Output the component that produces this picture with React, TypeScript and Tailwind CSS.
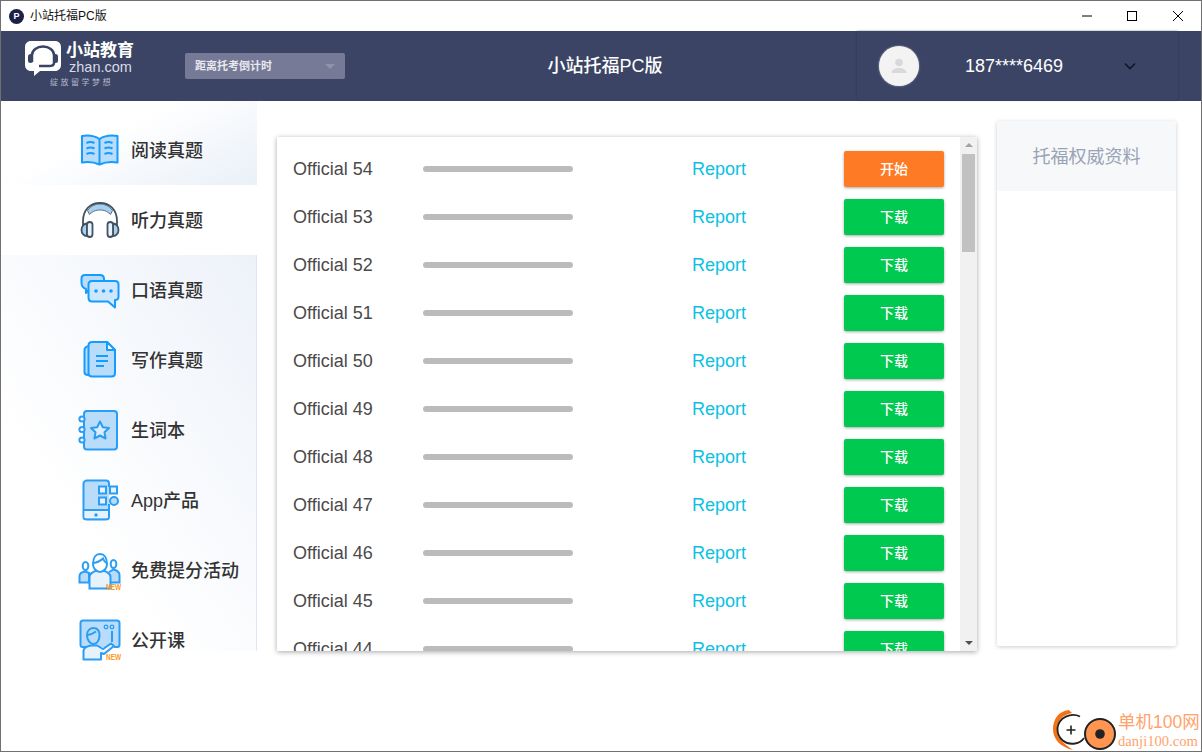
import type { ReactNode } from 'react'

const FONT = '"Liberation Sans", "Noto Sans CJK SC", sans-serif'
const BLUE = '#2a9df4'
const LINE = '#149cff'
const LIGHT = '#b9dcfa'

const papers = [54, 53, 52, 51, 50, 49, 48, 47, 46, 45, 44]

function IconBox({ children }: { children: ReactNode }) {
  return (
    <svg width="44" height="44" viewBox="0 0 44 44" fill="none" className="shrink-0 overflow-visible">
      {children}
    </svg>
  )
}

function BookIcon() {
  return (
    <IconBox>
      <path d="M21.500 11C16 7.500 10 7 4 8V34.500C10 33.500 16 34 21.500 36.500C27 34 33 33.500 39.500 34.500V8C33 7 27 7.500 21.500 11Z" fill={LIGHT} stroke={LINE} strokeWidth="2" strokeLinejoin="round" />
      <path d="M21.500 11V36" stroke={LINE} strokeWidth="2" />
      <path d="M8.500 15Q12.500 13 16.500 15M8.500 20.500Q12.500 18.500 16.500 20.500M8.500 26Q12.500 24 16.500 26M26.500 15Q30.500 13 34.500 15M26.500 20.500Q30.500 18.500 34.500 20.500M26.500 26Q30.500 24 34.500 26" stroke={LINE} strokeWidth="2" />
    </IconBox>
  )
}

function HeadphonesIcon() {
  return (
    <IconBox>
      <path d="M5 29V23C5 12 12 5 22 5C32 5 39 12 39 23V29" stroke="#43525f" strokeWidth="1.800" />
      <path d="M9.500 12.500C13 8 17 6 22 6C27 6 31 8 34.500 12.500L32.500 16.500C29 13 26 12 22 12C18 12 15 13 11.500 16.500Z" fill="#a6d0f2" stroke="#43525f" strokeWidth=".8" />
      <path d="M9 25.500C6 25.500 3.500 28.500 3.500 32C3.500 35.500 6 38 9 38Z" fill="#a6d0f2" stroke="#43525f" strokeWidth="1.800" />
      <path d="M35 25.500C38 25.500 40.500 28.500 40.500 32C40.500 35.500 38 38 35 38Z" fill="#a6d0f2" stroke="#43525f" strokeWidth="1.800" />
      <rect x="9" y="24" width="5.500" height="15" rx="2.700" fill="#e6f2fc" stroke="#43525f" strokeWidth="1.800" />
      <rect x="29.500" y="24" width="5.500" height="15" rx="2.700" fill="#e6f2fc" stroke="#43525f" strokeWidth="1.800" />
    </IconBox>
  )
}

function ChatIcon() {
  return (
    <IconBox>
      <path d="M7 7H22C24.500 7 26 8.500 26 11V22H11L8 25V21C5 20 3.500 18 3.500 15V10.500C3.500 8.500 5 7 7 7Z" fill={LIGHT} stroke={LINE} strokeWidth="2" strokeLinejoin="round" />
      <path d="M14 13H37C39.500 13 40.500 14.500 40.500 16.500V28.500C40.500 30.500 39.500 32 37 32V39.500L30 33.500H14C11.500 33.500 10.500 31.500 10.500 29.500V16.500C10.500 14.500 11.500 13 14 13Z" fill="#cfe7fc" stroke={LINE} strokeWidth="2" strokeLinejoin="round" />
      <circle cx="18" cy="23" r="1.800" fill={LINE} />
      <circle cx="25.500" cy="23" r="1.800" fill={LINE} />
      <circle cx="33" cy="23" r="1.800" fill={LINE} />
    </IconBox>
  )
}

function DocIcon() {
  return (
    <IconBox>
      <path d="M11 8C8 8.500 6.500 10 6.500 12V34C6.500 36 8 37 10 37H14" fill={LIGHT} stroke={LINE} strokeWidth="2" />
      <path d="M14 4H29L37 12V35C37 37.500 35.500 38.500 33.500 38.500H14C12 38.500 10.500 37.500 10.500 35V7.500C10.500 5.500 12 4 14 4Z" fill={LIGHT} stroke={LINE} strokeWidth="2" strokeLinejoin="round" />
      <path d="M29 4V12H37Z" fill="#fff" stroke={LINE} strokeWidth="2" strokeLinejoin="round" />
      <path d="M18 18H30M18 23H30M18 28H26" stroke={LINE} strokeWidth="2" />
    </IconBox>
  )
}

function NotebookIcon() {
  return (
    <IconBox>
      <rect x="6" y="3" width="33" height="38.500" rx="3" fill={LIGHT} stroke={BLUE} strokeWidth="2" />
      <circle cx="4" cy="11" r="2.600" fill="#fff" stroke={BLUE} strokeWidth="2" />
      <circle cx="4" cy="21.500" r="2.600" fill="#fff" stroke={BLUE} strokeWidth="2" />
      <circle cx="4" cy="32" r="2.600" fill="#fff" stroke={BLUE} strokeWidth="2" />
      <path d="M22 13.500L24.800 19.200L31 20L26.500 24.300L27.600 30.500L22 27.500L16.400 30.500L17.500 24.300L13 20L19.200 19.200Z" stroke={BLUE} strokeWidth="2" strokeLinejoin="round" fill="#dcedfb" />
    </IconBox>
  )
}

function AppIcon() {
  return (
    <IconBox>
      <path d="M31 9V5.500C31 3.500 29.500 2.500 28 2.500H9C7 2.500 5.500 4 5.500 5.500V39C5.500 40.500 7 41.500 9 41.500H27.500C29.500 41.500 31 40.500 31 39V26" fill={LIGHT} stroke={BLUE} strokeWidth="2" />
      <path d="M6.500 33H30V40H6.500Z" fill="#e6f2fc" />
      <path d="M5.500 32H31" stroke={BLUE} strokeWidth="2" />
      <circle cx="18" cy="37" r="1.700" fill={BLUE} />
      <rect x="21" y="8.500" width="7" height="7" fill="#e6f2fc" stroke={BLUE} strokeWidth="2" />
      <rect x="32" y="8.500" width="7" height="7" fill="#e6f2fc" stroke={BLUE} strokeWidth="2" />
      <rect x="21" y="19.500" width="7" height="7" fill="#e6f2fc" stroke={BLUE} strokeWidth="2" />
      <circle cx="36" cy="23" r="4" fill={LIGHT} stroke={BLUE} strokeWidth="2" />
    </IconBox>
  )
}

function NewTag() {
  return (
    <span className="absolute left-[28px] top-[35px] origin-left scale-x-[.72] text-[9px] leading-[9px] font-bold text-[#ff9a24]">
      NEW
    </span>
  )
}

function PeopleIcon() {
  return (
    <span className="relative block h-[44px] w-[44px] shrink-0">
      <IconBox>
        <ellipse cx="7.500" cy="18" rx="2.800" ry="4" stroke={BLUE} strokeWidth="2" />
        <ellipse cx="35.500" cy="16" rx="2.800" ry="4" stroke={BLUE} strokeWidth="2" />
        <path d="M1.500 34.500V28C1.500 25.500 4 24 7.500 23.500L11 25V34.500Z" fill={LIGHT} stroke={BLUE} strokeWidth="2" />
        <path d="M33 34.500H41.500V27C41.500 24 39 22.500 35.500 21.500L31 24" fill={LIGHT} stroke={BLUE} strokeWidth="2" />
        <path d="M11.500 40.500V29C11.500 25.500 14 24 19 22.500H25C30 24 32.500 25.500 32.500 29V40.500Z" fill="#e6f2fc" stroke={BLUE} strokeWidth="2" />
        <path d="M15 16C15 9.500 18 6 22 6C26 6 29 9.500 29 16C29 20 26 24 22 24C18 24 15 20 15 16Z" fill="#fff" stroke={BLUE} strokeWidth="2" />
        <path d="M15 15C19 14.500 23 12.500 25 10.500C26 13 27.500 14.500 29 15" stroke={BLUE} strokeWidth="2" />
      </IconBox>
      <NewTag />
    </span>
  )
}

function ClassIcon() {
  return (
    <span className="relative block h-[44px] w-[44px] shrink-0">
      <IconBox>
        <path d="M14 29H4.500C3 29 2.500 28 2.500 27V5C2.500 3.500 3.500 2.500 5 2.500H39C40.500 2.500 41.500 3.500 41.500 5V27C41.500 28 41 29 39.500 29H36" fill={LIGHT} stroke={BLUE} strokeWidth="2" />
        <circle cx="28" cy="9" r="1.800" stroke={BLUE} strokeWidth="1.300" />
        <circle cx="34" cy="9" r="1.800" stroke={BLUE} strokeWidth="1.300" />
        <path d="M34 13V24" stroke={BLUE} strokeWidth="2" />
        <path d="M5.500 41.500V33C5.500 30 8 28.500 13 27.500H19L25 31L33 25.500L36 28L26 36L23 35V41.500Z" fill="#e6f2fc" stroke={BLUE} strokeWidth="2" strokeLinejoin="round" />
        <path d="M9 17.500C9 12.500 12 10 15.500 10C19 10 21.500 12.500 21.500 17.500C21.500 22 19 26 15.500 26C12 26 9 22 9 17.500Z" fill={LIGHT} stroke={BLUE} strokeWidth="2" />
        <path d="M9.500 17C13 16.500 16 15 18 13.500" stroke={BLUE} strokeWidth="2" />
      </IconBox>
      <NewTag />
    </span>
  )
}

function MenuItem({ icon, label }: { icon: ReactNode; label: string }) {
  return (
    <div className="flex h-[70px] items-center gap-[9px] pl-[77px]">
      {icon}
      <span className="pt-[2px] text-[18px] font-medium text-[#333333]">{label}</span>
    </div>
  )
}

function WindowButtons() {
  return (
    <div className="flex h-full items-center">
      <svg width="46" height="30" viewBox="0 0 46 30">
        <path d="M19 15H29" stroke="#000" />
      </svg>
      <svg width="46" height="30" viewBox="0 0 46 30">
        <rect x="18.500" y="10.500" width="9" height="9" fill="none" stroke="#000" />
      </svg>
      <svg width="46" height="30" viewBox="0 0 46 30">
        <path d="M18 10L28 20M28 10L18 20" stroke="#000" />
      </svg>
    </div>
  )
}

function Logo() {
  return (
    <div className="flex w-[184px] shrink-0 flex-col pl-[24px] pt-[10px]">
      <div className="flex h-[38px] items-start gap-[5px]">
        <svg width="36" height="35" viewBox="0 0 36 35" className="shrink-0">
          <path d="M6 0H30C33.500 0 36 2.500 36 6V24C36 27.500 33.500 30 30 30H15L9 35V30H6C2.500 30 0 27.500 0 24V6C0 2.500 2.500 0 6 0Z" fill="#fff" />
          <path d="M7 21V14C7 9 12 5.500 18 5.500C24 5.500 29 9 29 14V22C29 24 27 25 24 25H14" fill="none" stroke="#3b4465" strokeWidth="2.500" />
          <rect x="3" y="13" width="5" height="9" rx="2.500" fill="#3b4465" />
          <rect x="28" y="13" width="5" height="9" rx="2.500" fill="#3b4465" />
        </svg>
        <div className="flex flex-col text-white">
          <span className="mt-[1px] text-[17px] font-bold leading-[18px]">小站教育</span>
          <span className="ml-[3px] text-[14.500px] leading-[15px] text-[#d8dae4]">zhan.com</span>
        </div>
      </div>
      <span className="ml-[25px] mt-[-1px] text-[8px] leading-[10px] tracking-[2.500px] text-[#b5b9c9]">绽放留学梦想</span>
    </div>
  )
}

export default function App() {
  return (
    <div
      className="relative flex h-[752px] w-[1202px] flex-col overflow-hidden border border-[#707070] bg-white"
      style={{ fontFamily: FONT }}
    >
      {/* title bar */}
      <div className="flex h-[30px] shrink-0 items-center justify-between bg-white">
        <div className="flex items-center gap-[6px] pl-[8px] text-[12px] text-[#111]">
          <span className="flex h-[15px] w-[15px] items-center justify-center rounded-full bg-[#1c2148] text-[9px] font-bold leading-none text-white">
            P
          </span>
          小站托福PC版
        </div>
        <WindowButtons />
      </div>

      {/* header */}
      <div className="flex h-[70px] shrink-0 bg-[#3b4465]">
        <Logo />
        <div className="mt-[22px] flex h-[26px] w-[160px] shrink-0 items-center justify-between rounded-[2px] bg-[#767a96] pl-[10px] pr-[10px]">
          <span className="text-[11px] font-bold text-[#e8e8ee]">距离托考倒计时</span>
          <span className="h-0 w-0 border-x-[5px] border-t-[5px] border-x-transparent border-t-[#8f93aa]" />
        </div>
        <div className="flex w-[512px] shrink-0 items-center justify-center pl-[8px] pt-[1px] text-[18px] font-medium text-white">
          小站托福PC版
        </div>
        <div className="flex h-[69px] w-[321px] shrink-0 items-center rounded-b-[2px] shadow-[0_0_2px_rgba(30,35,60,.6)]">
          <div className="ml-[22px] flex h-[40px] w-[40px] items-center justify-center rounded-full bg-[#f3f3f3] shadow-[0_0_2px_rgba(255,255,255,.6)]">
            <svg width="20" height="20" viewBox="0 0 20 20">
              <circle cx="10" cy="6.500" r="3.800" fill="#d9d9d9" />
              <path d="M2.500 17C2.500 13.500 6 12 10 12C14 12 17.500 13.500 17.500 17Z" fill="#d9d9d9" />
            </svg>
          </div>
          <span className="ml-[46px] w-[136px] pt-[1px] text-[18px] text-white">187****6469</span>
          <svg width="16" height="16" viewBox="0 0 16 16" className="ml-[21px]">
            <path d="M3 5.500L8 10.500L13 5.500" fill="none" stroke="#11152a" strokeWidth="1.600" />
          </svg>
        </div>
      </div>

      {/* body */}
      <div className="flex min-h-0 flex-1 items-start">
        <div className="flex w-[256px] shrink-0 flex-col">
          <div className="h-[84px] bg-[linear-gradient(155deg,#ffffff_40%,#e9f0f8_100%)] pt-[14px]">
            <MenuItem icon={<BookIcon />} label="阅读真题" />
          </div>
          <MenuItem icon={<HeadphonesIcon />} label="听力真题" />
          <div className="h-[396px] border-r border-[#dfe7f6] bg-[linear-gradient(235deg,#edf2f9_0%,#f8fafd_42%,#ffffff_70%)]">
            <MenuItem icon={<ChatIcon />} label="口语真题" />
            <MenuItem icon={<DocIcon />} label="写作真题" />
            <MenuItem icon={<NotebookIcon />} label="生词本" />
            <MenuItem icon={<AppIcon />} label="App产品" />
            <MenuItem icon={<PeopleIcon />} label="免费提分活动" />
            <MenuItem icon={<ClassIcon />} label="公开课" />
          </div>
        </div>

        {/* paper list */}
        <div className="ml-[20px] mt-[36px] flex h-[514px] w-[700px] shrink-0 overflow-hidden bg-white shadow-[0_1px_5px_rgba(0,0,0,.35)]">
          <div className="min-w-0 flex-1 overflow-hidden pt-[8px]">
            {papers.map((n, i) => (
              <div key={n} className="flex h-[48px] shrink-0 items-center pl-[16px]">
                <span className="w-[130px] text-[18px] text-[#4a4a4a]">Official {n}</span>
                <span className="h-[6px] w-[150px] rounded-full bg-[#bbbbbb]" />
                <span className="ml-[119px] w-[152px] text-[18px] text-[#0cc0e4]">Report</span>
                <button
                  className={`h-[36px] w-[100px] rounded-[2px] text-[14px] font-medium text-white shadow-[0_1px_3px_rgba(0,0,0,.35)] ${
                    i === 0 ? 'bg-[#ff7a25]' : 'bg-[#00c94f]'
                  }`}
                >
                  {i === 0 ? '开始' : '下载'}
                </button>
              </div>
            ))}
          </div>
          <div className="flex w-[17px] shrink-0 flex-col items-center bg-[#f1f1f1]">
            <span className="mt-[6px] h-0 w-0 border-x-[4px] border-b-[4px] border-x-transparent border-b-[#a3a3a3]" />
            <span className="mt-[7px] h-[98px] w-[13px] bg-[#c1c1c1]" />
            <span className="mt-auto mb-[6px] h-0 w-0 border-x-[4px] border-t-[4px] border-x-transparent border-t-[#505050]" />
          </div>
        </div>

        {/* side panel */}
        <div className="ml-[20px] mt-[20px] h-[525px] w-[179px] shrink-0 rounded-[2px] bg-white shadow-[0_1px_4px_rgba(0,0,0,.2)]">
          <div className="flex h-[70px] items-center justify-center bg-[#f7f8fa] pt-[2px] text-[18px] text-[#98a3b5]">
            托福权威资料
          </div>
        </div>
      </div>

      {/* watermark */}
      <div className="absolute bottom-0 right-[1px] flex items-end">
        <svg width="66" height="42" viewBox="0 0 66 42" className="shrink-0">
          <path d="M17 1C6 2 1 11 1 20C1 30 8 38 21 41C12 35 5 30 5 20C5 12 10 6 20 4Z" fill="#f57214" />
          <path d="M28 7.500C19 3.500 7 8 5.500 19C5 30 14 36 23 34.500C27 34 30 32 32 29" fill="none" stroke="#222" strokeWidth="1.800" />
          <path d="M14.500 21H23.500M19 16.500V25.500" stroke="#222" strokeWidth="1.600" />
          <circle cx="48" cy="25" r="15" fill="#ff9550" stroke="#222" strokeWidth="2" />
          <circle cx="48" cy="25" r="4.800" fill="#222" />
        </svg>
        <div className="flex w-[82px] flex-col pb-[2px] text-[#ffa26b]">
          <span className="whitespace-nowrap text-[17.500px] leading-[21px]">单机100网</span>
          <span className="whitespace-nowrap text-[14.600px] leading-[16px] [font-family:'Liberation_Serif',serif]">danji100.com</span>
        </div>
      </div>
    </div>
  )
}
